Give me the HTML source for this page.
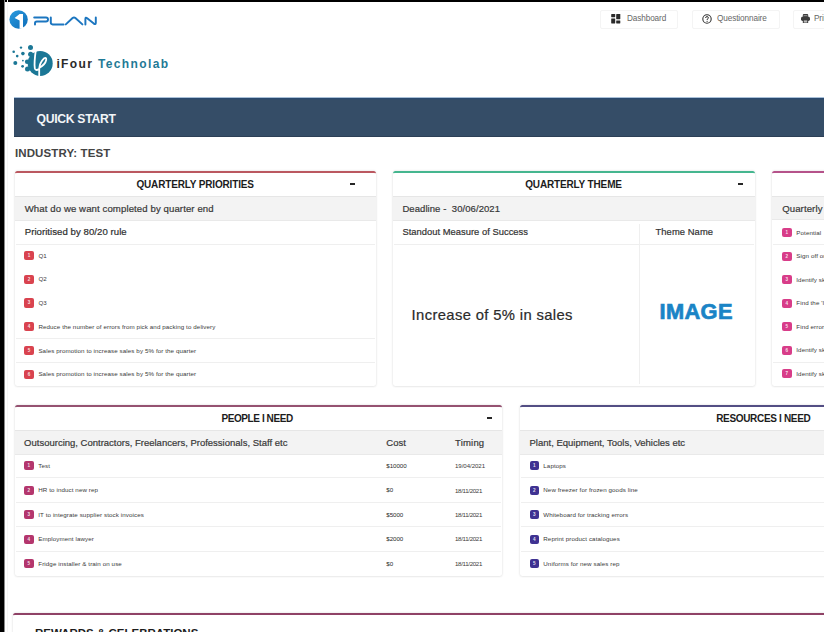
<!DOCTYPE html>
<html><head><meta charset="utf-8">
<style>
*{box-sizing:border-box;margin:0;padding:0}
html,body{width:824px;height:632px;overflow:hidden;background:#fff}
body{position:relative;font-family:"Liberation Sans",sans-serif;color:#333}
.t{position:absolute;line-height:1;white-space:pre}
.s{-webkit-text-stroke:0.2px currentColor}
.b{position:absolute}
.card{position:absolute;background:#fff;border-radius:2.5px;box-shadow:0 0 2.5px rgba(0,0,0,.14),0 1px 2px rgba(0,0,0,.04)}
.bdg{position:absolute;border-radius:2px;color:rgba(255,255,255,.85);font-weight:bold;font-size:4.6px;line-height:9.2px;text-align:center}
</style></head>
<body>
<div class="b" style="left:0px;top:0px;width:824px;height:1.7px;background:#000"></div>
<div class="b" style="left:0px;top:0px;width:4px;height:632px;background:#000"></div>
<div class="b" style="left:4px;top:0px;width:1px;height:632px;background:#8a8a8a"></div>
<div class="b" style="left:7px;top:0px;width:1px;height:632px;background:#f6f6f6"></div>
<div class="b" style="left:599.5px;top:9.5px;width:78.5px;height:19px;border:1px solid #f4f4f4;border-radius:2px;background:#fff"></div>
<div class="b" style="left:691.5px;top:9.5px;width:88px;height:19px;border:1px solid #f4f4f4;border-radius:2px;background:#fff"></div>
<div class="b" style="left:793px;top:9.5px;width:60px;height:19px;border:1px solid #f4f4f4;border-radius:2px;background:#fff"></div>
<div class="t " style="left:627.00px;top:14.86px;font-size:8.2px;color:#666;letter-spacing:-0.1px;">Dashboard</div>
<div class="t " style="left:717.00px;top:14.86px;font-size:8.2px;color:#666;letter-spacing:-0.1px;">Questionnaire</div>
<div class="t " style="left:814.00px;top:14.86px;font-size:8.2px;color:#666;letter-spacing:-0.1px;">Print</div>
<svg class="b" style="left:611px;top:14.3px" width="10" height="10" viewBox="0 0 10 10"><g fill="#2a2a2a"><rect x="0.2" y="0" width="4" height="3.2" rx=".4"/><rect x="0.2" y="4.4" width="4" height="5" rx=".4"/><rect x="5.2" y="0" width="4.1" height="5.2" rx=".4"/><rect x="5.2" y="6.4" width="4.1" height="3" rx=".4"/></g></svg>
<svg class="b" style="left:702px;top:14px" width="10" height="10" viewBox="0 0 10 10"><circle cx="5" cy="5" r="4.2" fill="none" stroke="#333" stroke-width="1.1"/><path d="M3.6 4 Q3.6 2.6 5 2.6 Q6.4 2.6 6.4 3.9 Q6.4 4.7 5.3 5.1 L5.1 6" fill="none" stroke="#333" stroke-width="1"/><circle cx="5.1" cy="7.3" r=".6" fill="#333"/></svg>
<svg class="b" style="left:800.6px;top:14px" width="9" height="9.4" viewBox="0 0 9 9.4"><g fill="#3c3c3c"><rect x="1.8" y="0" width="5.4" height="3" rx="1"/><rect x="0" y="2.6" width="9" height="4.4" rx="1.8"/><rect x="1.8" y="5.6" width="5.4" height="3.8" rx="1"/></g><rect x="2.8" y="6.4" width="3.4" height="2.2" fill="#bbb"/><rect x="2.6" y="1" width="3.8" height="1.2" fill="#888"/></svg>
<svg class="b" style="left:0;top:0" width="110" height="32" viewBox="0 0 110 32">
<defs><linearGradient id="g1" x1="0" y1="0" x2="1" y2="1"><stop offset="0" stop-color="#2a9be0"/><stop offset="1" stop-color="#0f6db8"/></linearGradient></defs>
<circle cx="18.6" cy="19.5" r="9.2" fill="url(#g1)"/>
<path d="M19.6 14.1 L23 14.1 L23 28.6 L19.6 28.6 L19.6 20.4 L14.6 17.9 Z" fill="#fff"/>
<g fill="none" stroke="#1c76c0" stroke-width="1.95" stroke-linecap="round" stroke-linejoin="round">
<path d="M34.2 17.4 H46 Q48 17.4 48 19.4 Q48 21.4 46 21.4 H36.8 Q35 21.4 35 23.2 V24.4"/>
<path d="M50.8 17.4 V22.6 Q50.8 24.4 52.6 24.4 H63.6"/>
<path d="M65.8 24.4 L72.6 18 Q74 16.8 75.4 18 L82.4 24.4"/>
<path d="M85.4 24.4 V19 Q85.4 16.8 87.2 18.2 L93.8 23.6 Q95.8 25 95.8 22.8 V17.4"/>
</g>
</svg>
<svg class="b" style="left:0;top:40px" width="60" height="40" viewBox="0 40 60 40">
<g fill="#1b7796">
<circle cx="40.2" cy="63.4" r="12.5"/>
<circle cx="30.5" cy="47.4" r="2.5"/>
<circle cx="30.6" cy="54.3" r="2.5"/>
<circle cx="27.2" cy="61.7" r="2.3"/>
<circle cx="27.5" cy="69" r="2.5"/>
<circle cx="21" cy="47.6" r="1.2"/>
<circle cx="13.7" cy="51.7" r="1.3"/>
<circle cx="22.9" cy="53.6" r="1.8"/>
<circle cx="17.2" cy="56.1" r="1.3"/>
<circle cx="22.9" cy="60.6" r="0.9"/>
<circle cx="15.3" cy="63.1" r="2"/>
<circle cx="22.6" cy="66.3" r="1.4"/>
</g>
<path d="M35.8 50.2 C35 56 34 63.5 34.8 68.2 Q35.6 71 38.6 69.4" fill="none" stroke="#fff" stroke-width="1.8" stroke-linecap="round"/>
<path d="M39.2 76.5 L39.2 68.5 Q39.8 62.5 43.8 58.6 Q46.6 56.6 46.2 60 Q45.2 64.6 39.6 67.6" fill="none" stroke="#fff" stroke-width="1.8" stroke-linecap="round"/>
</svg>
<div class="t " style="left:56.40px;top:58.04px;font-size:12px;color:#2a2a2a;font-weight:bold;letter-spacing:1.37px;">iFour <span style="color:#1f7a96">Technolab</span></div>
<div class="b" style="left:14.2px;top:97px;width:810px;height:40.4px;background:#354d67;border-top:1px solid #a9c0d8;box-shadow:inset 0 1.5px 0 #2a4a6f,inset 0 -1px 0 #2c3f56"></div>
<div class="t " style="left:36.50px;top:113.27px;font-size:12.2px;color:#f2f5f8;font-weight:bold;letter-spacing:-0.3px;">QUICK START</div>
<div class="t " style="left:15.00px;top:148.47px;font-size:11.5px;color:#444;font-weight:bold;letter-spacing:0.1px;">INDUSTRY: TEST</div>
<div class="card" style="left:15px;top:171px;width:361px;height:214.5px;border-top:2.2px solid #bb5860"></div>
<div class="t " style="left:136.40px;top:179.53px;font-size:10px;color:#1c1c1c;font-weight:bold;letter-spacing:-0.16px;">QUARTERLY PRIORITIES</div>
<div class="b" style="left:350px;top:183.10000000000002px;width:5.2px;height:2px;background:#262626"></div>
<div class="b" style="left:15px;top:196px;width:361px;height:24.5px;background:#f3f3f3;border-top:1px solid #e6e6e6;border-bottom:1px solid #e9e9e9"></div>
<div class="t s" style="left:24.70px;top:203.87px;font-size:9.6px;color:#383838;letter-spacing:0.1px;">What do we want completed by quarter end</div>
<div class="t s" style="left:24.70px;top:227.27px;font-size:9.6px;color:#2e2e2e;letter-spacing:0.05px;">Prioritised by 80/20 rule</div>
<div class="b" style="left:16px;top:243.5px;width:359px;height:1px;background:#efefef"></div>
<div class="bdg" style="left:24.2px;top:251.0px;width:9.5px;height:9.2px;background:#d9434f">1</div>
<div class="t " style="left:38.40px;top:252.75px;font-size:6.2px;color:#3a3a3a;letter-spacing:0.1px;">Q1</div>
<div class="bdg" style="left:24.2px;top:274.72px;width:9.5px;height:9.2px;background:#d9434f">2</div>
<div class="t " style="left:38.40px;top:276.47px;font-size:6.2px;color:#3a3a3a;letter-spacing:0.1px;">Q2</div>
<div class="bdg" style="left:24.2px;top:298.44px;width:9.5px;height:9.2px;background:#d9434f">3</div>
<div class="t " style="left:38.40px;top:300.19px;font-size:6.2px;color:#3a3a3a;letter-spacing:0.1px;">Q3</div>
<div class="bdg" style="left:24.2px;top:322.15999999999997px;width:9.5px;height:9.2px;background:#d9434f">4</div>
<div class="t " style="left:38.40px;top:323.91px;font-size:6.2px;color:#3a3a3a;letter-spacing:0.1px;">Reduce the number of errors from pick and packing to delivery</div>
<div class="bdg" style="left:24.2px;top:345.88px;width:9.5px;height:9.2px;background:#d9434f">5</div>
<div class="t " style="left:38.40px;top:347.63px;font-size:6.2px;color:#3a3a3a;letter-spacing:0.1px;">Sales promotion to increase sales by 5% for the quarter</div>
<div class="bdg" style="left:24.2px;top:369.6px;width:9.5px;height:9.2px;background:#d9434f">6</div>
<div class="t " style="left:38.40px;top:371.35px;font-size:6.2px;color:#3a3a3a;letter-spacing:0.1px;">Sales promotion to increase sales by 5% for the quarter</div>
<div class="b" style="left:16px;top:338px;width:359px;height:1px;background:#efefef"></div>
<div class="b" style="left:16px;top:361.5px;width:359px;height:1px;background:#efefef"></div>
<div class="card" style="left:393px;top:171px;width:361.5px;height:214.5px;border-top:2.2px solid #45b68f"></div>
<div class="t " style="left:525.20px;top:179.53px;font-size:10px;color:#1c1c1c;font-weight:bold;letter-spacing:-0.15px;">QUARTERLY THEME</div>
<div class="b" style="left:738.3px;top:183.10000000000002px;width:5.2px;height:2px;background:#262626"></div>
<div class="b" style="left:393px;top:196px;width:361.5px;height:24.5px;background:#f3f3f3;border-top:1px solid #e6e6e6;border-bottom:1px solid #e9e9e9"></div>
<div class="t s" style="left:402.40px;top:204.46px;font-size:9.5px;color:#383838;letter-spacing:0.07px;">Deadline -  30/06/2021</div>
<div class="t s" style="left:402.40px;top:227.24px;font-size:9.4px;color:#333;letter-spacing:0.02px;">Standout Measure of Success</div>
<div class="t s" style="left:655.50px;top:227.24px;font-size:9.4px;color:#333;letter-spacing:0.08px;">Theme Name</div>
<div class="b" style="left:394px;top:243.5px;width:359.5px;height:1px;background:#efefef"></div>
<div class="b" style="left:639.3px;top:223.5px;width:1px;height:160px;background:#efefef"></div>
<div class="t s" style="left:411.60px;top:308.07px;font-size:14.8px;color:#2b2b2b;letter-spacing:0.36px;">Increase of 5% in sales</div>
<div class="t " style="left:659.60px;top:300.65px;font-size:21.8px;color:#1a84c6;font-weight:bold;letter-spacing:0.35px;-webkit-text-stroke:0.7px #1a84c6;">IMAGE</div>
<div class="card" style="left:772px;top:171px;width:361px;height:214.5px;border-top:2.2px solid #b5528a"></div>
<div class="b" style="left:772px;top:196px;width:361px;height:24px;background:#f3f3f3;border-top:1px solid #e6e6e6;border-bottom:1px solid #e9e9e9"></div>
<div class="t s" style="left:782.20px;top:203.87px;font-size:9.6px;color:#383838;letter-spacing:0.1px;">Quarterly</div>
<div class="bdg" style="left:782.1px;top:228.0px;width:9.5px;height:9.2px;background:#d83d89">1</div>
<div class="t " style="left:796.30px;top:229.75px;font-size:6.2px;color:#3a3a3a;letter-spacing:0.1px;">Potential</div>
<div class="bdg" style="left:782.1px;top:251.52px;width:9.5px;height:9.2px;background:#d83d89">2</div>
<div class="t " style="left:796.30px;top:253.27px;font-size:6.2px;color:#3a3a3a;letter-spacing:0.1px;">Sign off on</div>
<div class="bdg" style="left:782.1px;top:275.04px;width:9.5px;height:9.2px;background:#d83d89">3</div>
<div class="t " style="left:796.30px;top:276.79px;font-size:6.2px;color:#3a3a3a;letter-spacing:0.1px;">Identify skills</div>
<div class="bdg" style="left:782.1px;top:298.56px;width:9.5px;height:9.2px;background:#d83d89">4</div>
<div class="t " style="left:796.30px;top:300.31px;font-size:6.2px;color:#3a3a3a;letter-spacing:0.1px;">Find the 'I'</div>
<div class="bdg" style="left:782.1px;top:322.08px;width:9.5px;height:9.2px;background:#d83d89">5</div>
<div class="t " style="left:796.30px;top:323.83px;font-size:6.2px;color:#3a3a3a;letter-spacing:0.1px;">Find errors</div>
<div class="bdg" style="left:782.1px;top:345.6px;width:9.5px;height:9.2px;background:#d83d89">6</div>
<div class="t " style="left:796.30px;top:347.35px;font-size:6.2px;color:#3a3a3a;letter-spacing:0.1px;">Identify skills</div>
<div class="bdg" style="left:782.1px;top:369.12px;width:9.5px;height:9.2px;background:#d83d89">7</div>
<div class="t " style="left:796.30px;top:370.87px;font-size:6.2px;color:#3a3a3a;letter-spacing:0.1px;">Identify skills</div>
<div class="b" style="left:773px;top:243.8px;width:359px;height:1px;background:#efefef"></div>
<div class="b" style="left:773px;top:362px;width:359px;height:1px;background:#efefef"></div>
<div class="card" style="left:15px;top:404.6px;width:486.5px;height:171.4px;border-top:2.2px solid #955271"></div>
<div class="t " style="left:221.50px;top:414.24px;font-size:10px;color:#1c1c1c;font-weight:bold;letter-spacing:-0.42px;">PEOPLE I NEED</div>
<div class="b" style="left:487px;top:416.8px;width:5.2px;height:2px;background:#262626"></div>
<div class="b" style="left:15px;top:430px;width:486.5px;height:24.5px;background:#f3f3f3;border-top:1px solid #e6e6e6;border-bottom:1px solid #e9e9e9"></div>
<div class="t s" style="left:24.10px;top:437.76px;font-size:9.5px;color:#383838;">Outsourcing, Contractors, Freelancers, Professionals, Staff etc</div>
<div class="t s" style="left:386.30px;top:437.76px;font-size:9.5px;color:#383838;">Cost</div>
<div class="t s" style="left:455.00px;top:437.76px;font-size:9.5px;color:#383838;letter-spacing:0.2px;">Timing</div>
<div class="bdg" style="left:24.1px;top:461.3px;width:9.5px;height:9.2px;background:#b4366d">1</div>
<div class="t " style="left:38.30px;top:463.05px;font-size:6.2px;color:#3a3a3a;letter-spacing:0.1px;">Test</div>
<div class="t " style="left:386.30px;top:463.05px;font-size:6.2px;color:#2a2a2a;letter-spacing:-0.05px;">$10000</div>
<div class="t " style="left:455.00px;top:463.14px;font-size:6.1px;color:#3a3a3a;letter-spacing:-0.05px;">19/04/2021</div>
<div class="bdg" style="left:24.1px;top:485.7px;width:9.5px;height:9.2px;background:#b4366d">2</div>
<div class="t " style="left:38.30px;top:487.45px;font-size:6.2px;color:#3a3a3a;letter-spacing:0.1px;">HR to induct new rep</div>
<div class="t " style="left:386.30px;top:487.45px;font-size:6.2px;color:#2a2a2a;letter-spacing:-0.05px;">$0</div>
<div class="t " style="left:455.00px;top:487.54px;font-size:6.1px;color:#3a3a3a;letter-spacing:-0.3px;">18/11/2021</div>
<div class="bdg" style="left:24.1px;top:510.1px;width:9.5px;height:9.2px;background:#b4366d">3</div>
<div class="t " style="left:38.30px;top:511.85px;font-size:6.2px;color:#3a3a3a;letter-spacing:0.1px;">IT to integrate supplier stock invoices</div>
<div class="t " style="left:386.30px;top:511.85px;font-size:6.2px;color:#2a2a2a;letter-spacing:-0.05px;">$5000</div>
<div class="t " style="left:455.00px;top:511.94px;font-size:6.1px;color:#3a3a3a;letter-spacing:-0.3px;">18/11/2021</div>
<div class="bdg" style="left:24.1px;top:534.5px;width:9.5px;height:9.2px;background:#b4366d">4</div>
<div class="t " style="left:38.30px;top:536.25px;font-size:6.2px;color:#3a3a3a;letter-spacing:0.1px;">Employment lawyer</div>
<div class="t " style="left:386.30px;top:536.25px;font-size:6.2px;color:#2a2a2a;letter-spacing:-0.05px;">$2000</div>
<div class="t " style="left:455.00px;top:536.34px;font-size:6.1px;color:#3a3a3a;letter-spacing:-0.3px;">18/11/2021</div>
<div class="bdg" style="left:24.1px;top:558.9px;width:9.5px;height:9.2px;background:#b4366d">5</div>
<div class="t " style="left:38.30px;top:560.65px;font-size:6.2px;color:#3a3a3a;letter-spacing:0.1px;">Fridge installer &amp; train on use</div>
<div class="t " style="left:386.30px;top:560.65px;font-size:6.2px;color:#2a2a2a;letter-spacing:-0.05px;">$0</div>
<div class="t " style="left:455.00px;top:560.74px;font-size:6.1px;color:#3a3a3a;letter-spacing:-0.3px;">18/11/2021</div>
<div class="b" style="left:16px;top:477px;width:484.5px;height:1px;background:#efefef"></div>
<div class="b" style="left:16px;top:501.5px;width:484.5px;height:1px;background:#efefef"></div>
<div class="b" style="left:16px;top:526px;width:484.5px;height:1px;background:#efefef"></div>
<div class="b" style="left:16px;top:550.7px;width:484.5px;height:1px;background:#efefef"></div>
<div class="card" style="left:520px;top:404.6px;width:487px;height:171.4px;border-top:2.2px solid #534e84"></div>
<div class="t " style="left:716.20px;top:414.14px;font-size:10px;color:#1c1c1c;font-weight:bold;letter-spacing:-0.33px;">RESOURCES I NEED</div>
<div class="b" style="left:520px;top:430px;width:487px;height:24.5px;background:#f3f3f3;border-top:1px solid #e6e6e6;border-bottom:1px solid #e9e9e9"></div>
<div class="t s" style="left:529.50px;top:437.76px;font-size:9.5px;color:#383838;">Plant, Equipment, Tools, Vehicles etc</div>
<div class="bdg" style="left:529.6px;top:461.3px;width:9.5px;height:9.2px;background:#3f3292">1</div>
<div class="t " style="left:543.30px;top:463.05px;font-size:6.2px;color:#3a3a3a;letter-spacing:0.1px;">Laptops</div>
<div class="bdg" style="left:529.6px;top:485.7px;width:9.5px;height:9.2px;background:#3f3292">2</div>
<div class="t " style="left:543.30px;top:487.45px;font-size:6.2px;color:#3a3a3a;letter-spacing:0.1px;">New freezer for frozen goods line</div>
<div class="bdg" style="left:529.6px;top:510.1px;width:9.5px;height:9.2px;background:#3f3292">3</div>
<div class="t " style="left:543.30px;top:511.85px;font-size:6.2px;color:#3a3a3a;letter-spacing:0.1px;">Whiteboard for tracking errors</div>
<div class="bdg" style="left:529.6px;top:534.5px;width:9.5px;height:9.2px;background:#3f3292">4</div>
<div class="t " style="left:543.30px;top:536.25px;font-size:6.2px;color:#3a3a3a;letter-spacing:0.1px;">Reprint product catalogues</div>
<div class="bdg" style="left:529.6px;top:558.9px;width:9.5px;height:9.2px;background:#3f3292">5</div>
<div class="t " style="left:543.30px;top:560.65px;font-size:6.2px;color:#3a3a3a;letter-spacing:0.1px;">Uniforms for new sales rep</div>
<div class="b" style="left:521px;top:477px;width:485px;height:1px;background:#efefef"></div>
<div class="b" style="left:521px;top:501.5px;width:485px;height:1px;background:#efefef"></div>
<div class="b" style="left:521px;top:526px;width:485px;height:1px;background:#efefef"></div>
<div class="b" style="left:521px;top:550.7px;width:485px;height:1px;background:#efefef"></div>
<div class="card" style="left:13.2px;top:613.2px;width:830px;height:60px;border-top:2.2px solid #8f4266"></div>
<div class="t " style="left:35.00px;top:628.47px;font-size:11.5px;color:#1c1c1c;font-weight:bold;">REWARDS &amp; CELEBRATIONS</div>
</body></html>
